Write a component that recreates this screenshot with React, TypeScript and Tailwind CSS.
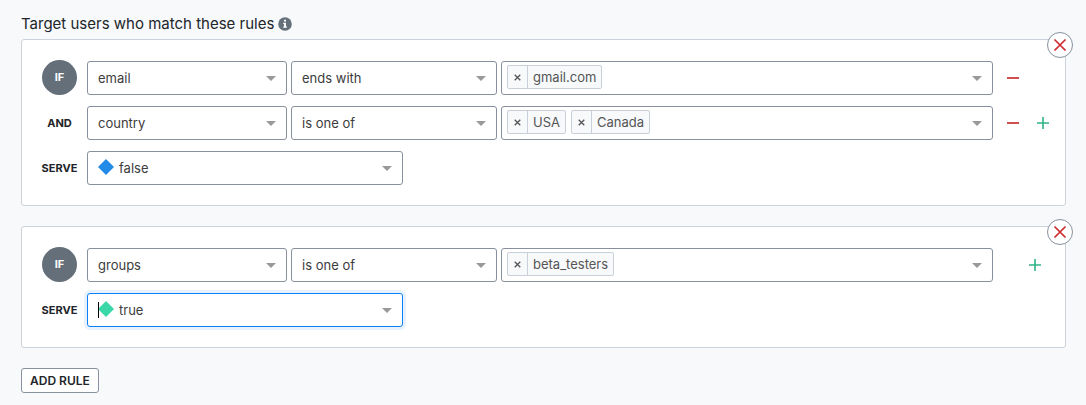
import { useId, useState, type ReactNode } from "react";
import clsx from "clsx";

function Caret() {
  return (
    <svg width="10" height="5" viewBox="0 0 10 5" className="pointer-events-none absolute top-[15px] right-[11px]" aria-hidden="true">
      <path d="M0 0h10L5 5z" fill="#999999" />
    </svg>
  );
}

const MINUS = "M1 6h12v2H1z";
const PLUS = "M1 6.2h5.2V1h1.6v5.2H13v1.6H7.8V13H6.2V7.8H1z";

type SelectProps = {
  label: string;
  options: string[];
  className?: string;
  swatches?: Record<string, string>;
  active?: boolean;
};

function Select({ label, options, className, swatches, active }: SelectProps) {
  const [value, setValue] = useState(options[0]);
  return (
    <div className={clsx("relative h-[34px]", className)}>
      <select
        aria-label={label}
        value={value}
        onChange={(e) => setValue(e.target.value)}
        className={clsx(
          "size-full appearance-none rounded-[3px] border bg-white pt-px pr-8 text-[13px] text-[#3c3c3c] outline-none",
          swatches ? "pl-[31px]" : "pl-[10px]",
          active ? "border-[#0b7ff5] shadow-[0_0_0_3px_#e8f2fe]" : "border-[#87909c]",
        )}
      >
        {options.map((o) => (
          <option key={o}>{o}</option>
        ))}
      </select>
      {swatches && (
        <svg width="16" height="16" viewBox="0 0 16 16" className="pointer-events-none absolute top-2 left-[11px]" aria-hidden="true">
          <path d="M8 0l8 8-8 8-8-8z" fill={swatches[value]} />
        </svg>
      )}
      {active && <span className="pointer-events-none absolute top-[9px] left-[11px] h-4 w-px bg-black" />}
      <Caret />
    </div>
  );
}

function TagInput({ initial }: { initial: string[] }) {
  const [tags, setTags] = useState(initial);
  return (
    <div className="relative flex h-[34px] min-w-0 flex-1 gap-[5px] rounded-[3px] border border-[#87909c] bg-white pt-[3px] pr-8 pl-[5px] text-[13px] text-[#555555]">
      {tags.map((t) => (
        <span key={t} className="flex h-6 rounded-[2px] border border-[#c9d0d9] bg-[#f7f9fb]">
          <button
            type="button"
            aria-label={`Remove ${t}`}
            onClick={() => setTags(tags.filter((x) => x !== t))}
            className="flex w-5 items-center justify-center border-r border-[#c9d0d9]"
          >
            <svg width="7" height="7" viewBox="0 0 7 7" aria-hidden="true">
              <path d="M.7.7l5.6 5.6M6.3.7L.7 6.3" stroke="#555555" strokeWidth="1.3" />
            </svg>
          </button>
          <span className="px-[5px] leading-[22px]">{t}</span>
        </span>
      ))}
      <input aria-label="Add a value" className="min-w-0 flex-1 outline-none" />
      <span className="pointer-events-none absolute -inset-px">
        <Caret />
      </span>
    </div>
  );
}

function IconButton({ label, path, className }: { label: string; path: string; className: string }) {
  return (
    <button type="button" aria-label={label} className={clsx("flex h-[34px] w-[30px] items-center justify-center", className)}>
      <svg width="14" height="14" viewBox="0 0 14 14" aria-hidden="true">
        <path d={path} fill="currentColor" />
      </svg>
    </button>
  );
}

function Row({ label, children }: { label: string; children: ReactNode }) {
  return (
    <div className="flex h-[35px] items-end">
      {label === "IF" ? (
        <span className="mr-[10px] flex size-[35px] shrink-0 items-center justify-center rounded-full bg-[#646f7a] text-[11px] font-bold text-white">
          IF
        </span>
      ) : (
        <span className="mr-[10px] flex h-[34px] w-[35px] shrink-0 items-center justify-center text-[11px] font-bold text-[#212529]">
          {label}
        </span>
      )}
      {children}
    </div>
  );
}

type ClauseProps = { label: string; attributes: string[]; operators: string[]; values: string[]; children: ReactNode };

function Clause({ label, attributes, operators, values, children }: ClauseProps) {
  return (
    <Row label={label}>
      <div className="flex min-w-0 flex-1 gap-1">
        <Select label="Attribute" options={attributes} className="w-[200px]" />
        <Select label="Operator" options={operators} className="w-[206px]" />
        <TagInput initial={values} />
      </div>
      <div className="flex w-[72px] shrink-0 pl-[5px]">{children}</div>
    </Row>
  );
}

const SWATCHES = { false: "#248ae8", true: "#3ad8a8" };

function RuleCard({ children }: { children: ReactNode }) {
  return (
    <section className="relative flex flex-col gap-[10px] rounded-[3px] border border-[#cdd3db] bg-white py-5 pl-5">
      {children}
      <button
        type="button"
        aria-label="Delete rule"
        className="absolute -top-2 -right-2 flex size-[26px] items-center justify-center rounded-full border border-[#87909c] bg-white"
      >
        <svg width="14" height="14" viewBox="0 0 14 14" aria-hidden="true">
          <path d="M1.5 1.5l11 11M12.5 1.5l-11 11" stroke="#cf2a2e" strokeWidth="1.7" />
        </svg>
      </button>
    </section>
  );
}

export default function App() {
  const id = useId();
  return (
    <main className="min-h-screen bg-[#f7f9fb] pt-[9px] pr-5 pb-3 pl-[21px] font-['Inter',sans-serif]" aria-labelledby={id}>
      <div className="flex h-[30px] items-center gap-1">
        <h2 id={id} className="text-[15px] font-normal text-[#212529]">
          Target users who match these rules
        </h2>
        <svg width="14" height="14" viewBox="0 0 14 14" aria-hidden="true">
          <circle cx="7" cy="7" r="6.8" fill="#646f7a" />
          <path d="M6 2.7h2v1.9H6zM5.2 5.8H8v3.7h.9v1.2H5.2V9.5h.9V7h-.9z" fill="#ffffff" />
        </svg>
      </div>

      <div className="flex flex-col gap-5">
        <RuleCard>
          <Clause label="IF" attributes={["email", "country", "groups"]} operators={["ends with", "is one of"]} values={["gmail.com"]}>
            <IconButton label="Remove clause" path={MINUS} className="text-[#d05050]" />
          </Clause>
          <Clause label="AND" attributes={["country", "email", "groups"]} operators={["is one of", "ends with"]} values={["USA", "Canada"]}>
            <IconButton label="Remove clause" path={MINUS} className="text-[#d05050]" />
            <IconButton label="Add clause" path={PLUS} className="text-[#2fb286]" />
          </Clause>
          <Row label="SERVE">
            <Select label="Variation" options={["false", "true"]} swatches={SWATCHES} className="w-[316px]" />
          </Row>
        </RuleCard>

        <RuleCard>
          <Clause label="IF" attributes={["groups", "email", "country"]} operators={["is one of", "ends with"]} values={["beta_testers"]}>
            <IconButton label="Add clause" path={PLUS} className="ml-[22px] text-[#2fb286]" />
          </Clause>
          <Row label="SERVE">
            <Select label="Variation" options={["true", "false"]} swatches={SWATCHES} active className="w-[316px]" />
          </Row>
        </RuleCard>
      </div>

      <button type="button" className="mt-5 block h-[25px] rounded-[3px] border border-[#87909c] bg-white px-2 text-[12px] font-semibold text-[#212529]">
        ADD RULE
      </button>
    </main>
  );
}
